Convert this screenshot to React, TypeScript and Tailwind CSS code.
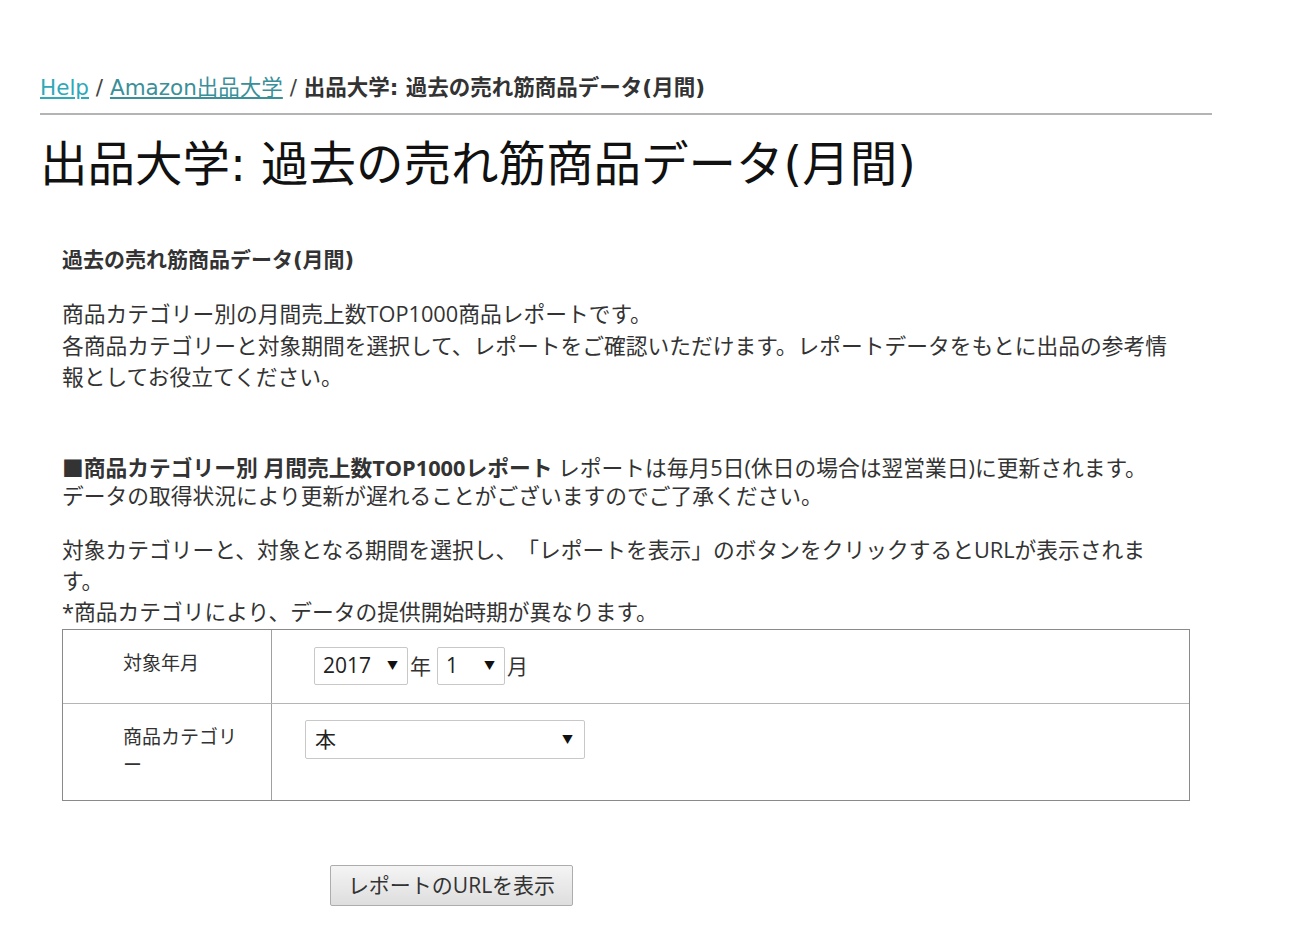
import React, { useState } from 'react';

const font = { fontFamily: '"Open Sans", "Noto Sans CJK JP", sans-serif' };
const crumbFont = { fontFamily: '"DejaVu Sans", "Noto Sans CJK JP", sans-serif' };

const FakeSelect: React.FC<{ value: string; className: string }> = ({ value, className }) => (
    <div className={`flex items-center justify-between bg-white border border-[#c8c8c8] rounded-[2px] ${className}`}>
        <span className="text-[21px] leading-none text-[#222]">{value}</span>
        <span className="text-[11px] leading-none text-[#111]">▼</span>
    </div>
);

export default function App() {
    const [shown, setShown] = useState(false);

    return (
        <div className="min-h-[947px] bg-white text-[#333] [text-spacing-trim:space-all]" style={font}>
            <div className="w-[1172px] ml-[40px] pt-[73px]">
                {/* breadcrumb */}
                <div className="text-[21.5px] leading-[30px] pb-[10px] border-b-2 border-[#b4b4b4]" style={crumbFont}>
                    <a href="#" className="text-[#2fa8b8] underline underline-offset-2">Help</a>
                    <span className="text-[#444]"> / </span>
                    <a href="#" className="text-[#3a8f99] underline underline-offset-2">Amazon出品大学</a>
                    <span className="text-[#444]"> / </span>
                    <span className="font-bold text-[#333]">出品大学: 過去の売れ筋商品データ(月間)</span>
                </div>

                <h1 className="mt-[22px] text-[47.5px] leading-[56px] font-normal text-[#111]" style={crumbFont}>
                    出品大学: 過去の売れ筋商品データ(月間)
                </h1>

                <div className="mx-[22px] w-[1128px]">
                    <h2 className="mt-[52px] text-[21px] leading-[30px] font-bold text-[#333]" style={crumbFont}>
                        過去の売れ筋商品データ(月間)
                    </h2>

                    <p className="mt-[23px] text-[21.75px] leading-[31.5px]">
                        商品カテゴリー別の月間売上数TOP1000商品レポートです。
                        <br />
                        各商品カテゴリーと対象期間を選択して、レポートをご確認いただけます。レポートデータをもとに出品の参考情
                        <br />
                        報としてお役立てください。
                    </p>

                    <p className="mt-[61px] text-[21.75px] leading-[28px]">
                        <span className="font-bold">■商品カテゴリー別 月間売上数TOP1000レポート</span> レポートは毎月5日(休日の場合は翌営業日)に更新されます。
                        <br />
                        データの取得状況により更新が遅れることがございますのでご了承ください。
                    </p>

                    <p className="mt-[24px] text-[21.75px] leading-[31px]">
                        対象カテゴリーと、対象となる期間を選択し、「レポートを表示」のボタンをクリックするとURLが表示されま
                        <br />
                        す。
                        <br />
                        *商品カテゴリにより、データの提供開始時期が異なります。
                    </p>

                    {/* form table */}
                    <div className="mt-[2px] border border-[#8a8a8a]">
                        <div className="flex h-[74px] border-b border-[#b5b5b5]">
                            <div className="w-[209px] shrink-0 border-r border-[#a0a0a0] pl-[60px] pr-[29px] pt-[19px] text-[19px] leading-[28px]">
                                対象年月
                            </div>
                            <div className="flex items-start pl-[42px] pt-[17px] text-[21px] leading-[38px]">
                                <FakeSelect value="2017" className="w-[94px] h-[38px] pl-[8px] pr-[9px]" />
                                <span className="ml-[2px]">年</span>
                                <FakeSelect value="1" className="ml-[6px] w-[68px] h-[38px] pl-[8px] pr-[9px]" />
                                <span className="ml-[2px]">月</span>
                            </div>
                        </div>
                        <div className="flex h-[96px]">
                            <div className="w-[209px] shrink-0 border-r border-[#a0a0a0] pl-[60px] pr-[29px] pt-[19px] text-[19px] leading-[28px]">
                                商品カテゴリー
                            </div>
                            <div className="pl-[33px] pt-[16px]">
                                <FakeSelect value="本" className="w-[280px] h-[39px] pl-[9px] pr-[11px]" />
                            </div>
                        </div>
                    </div>

                    <button
                        onClick={() => setShown(true)}
                        className="mt-[64px] ml-[268px] w-[243px] h-[41px] rounded-[2px] border border-[#adadad] bg-gradient-to-b from-[#f4f4f4] to-[#dedede] text-[21px] leading-none text-[#333]"
                    >
                        レポートのURLを表示
                    </button>
                    {shown && <div className="mt-4 text-[18px]"></div>}
                </div>
            </div>
        </div>
    );
}
